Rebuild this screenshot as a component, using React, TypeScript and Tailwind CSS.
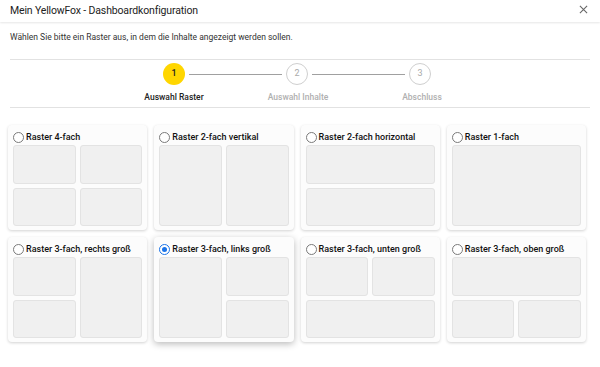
import React from "react";

type Layout = "4" | "2v" | "2h" | "1" | "3r" | "3l" | "3u" | "3o";

const P = ({ className = "" }: { className?: string }) => (
  <div className={`bg-[#f0f0f0] border border-[#e3e3e3] rounded-[3px] ${className}`} />
);

function Panels({ layout }: { layout: Layout }) {
  const g = "grid h-[81px] gap-[4px]";
  switch (layout) {
    case "4":
      return (
        <div className={`${g} grid-cols-2 grid-rows-2`}>
          <P /><P /><P /><P />
        </div>
      );
    case "2v":
      return (
        <div className={`${g} grid-cols-2`}>
          <P /><P />
        </div>
      );
    case "2h":
      return (
        <div className={`${g} grid-rows-2`}>
          <P /><P />
        </div>
      );
    case "1":
      return (
        <div className={`${g}`}>
          <P />
        </div>
      );
    case "3r":
      return (
        <div className={`${g} grid-cols-2 grid-rows-2`}>
          <P /><P className="row-span-2" /><P />
        </div>
      );
    case "3l":
      return (
        <div className={`${g} grid-cols-2 grid-rows-2`}>
          <P className="row-span-2" /><P /><P />
        </div>
      );
    case "3u":
      return (
        <div className={`${g} grid-cols-2 grid-rows-2`}>
          <P /><P /><P className="col-span-2" />
        </div>
      );
    case "3o":
      return (
        <div className={`${g} grid-cols-2 grid-rows-2`}>
          <P className="col-span-2" /><P /><P />
        </div>
      );
  }
}

const cards: { label: string; layout: Layout; selected?: boolean }[] = [
  { label: "Raster 4-fach", layout: "4" },
  { label: "Raster 2-fach vertikal", layout: "2v" },
  { label: "Raster 2-fach horizontal", layout: "2h" },
  { label: "Raster 1-fach", layout: "1" },
  { label: "Raster 3-fach, rechts groß", layout: "3r" },
  { label: "Raster 3-fach, links groß", layout: "3l", selected: true },
  { label: "Raster 3-fach, unten groß", layout: "3u" },
  { label: "Raster 3-fach, oben groß", layout: "3o" },
];

function Card({ label, layout, selected }: { label: string; layout: Layout; selected?: boolean }) {
  return (
    <div
      className={`h-[105px] min-w-0 rounded-[4px] bg-[#fcfcfc] px-[5px] pt-[4px] pb-[4px] ${
        selected
          ? "shadow-[0_2px_7px_rgba(0,0,0,0.28)]"
          : "shadow-[0_1px_3px_rgba(0,0,0,0.18)]"
      }`}
    >
      <div className="flex h-[16px] items-center gap-[2px]">
        {selected ? (
          <span className="flex h-[11px] w-[11px] items-center justify-center rounded-full border-[1.5px] border-[#1a73e8] bg-white">
            <span className="h-[5px] w-[5px] rounded-full bg-[#1a73e8]" />
          </span>
        ) : (
          <span className="h-[11px] w-[11px] rounded-full border border-[#7a7a7a] bg-white" />
        )}
        <span className="text-[9px] font-medium text-[#111] leading-none">{label}</span>
      </div>
      <Panels layout={layout} />
    </div>
  );
}

export default function App() {
  return (
    <div
      className="h-[367px] w-[600px] overflow-hidden bg-white"
      style={{ fontFamily: "Roboto, 'Noto Sans', sans-serif" }}
    >
      <div className="flex h-[22px] items-center justify-between pl-[10px] pr-[12px] shadow-[0_1px_2px_rgba(0,0,0,0.1)]">
        <span className="text-[10.5px] tracking-[-0.15px] text-[#222]">Mein YellowFox - Dashboardkonfiguration</span>
        <svg width="9" height="9" viewBox="0 0 10 10" className="mt-[-3px]">
          <path d="M1 1L9 9M9 1L1 9" stroke="#666" strokeWidth="1.2" />
        </svg>
      </div>
      <div className="px-[10px] pt-[9px] text-[8.5px] text-[#333] leading-[12px]">
        Wählen Sie bitte ein Raster aus, in dem die Inhalte angezeigt werden sollen.
      </div>
      <div className="mx-[10px] mt-[16px] border-y border-[#e2e2e2] h-[49px]">
        <div className="flex items-center pl-[153px] pt-[3px]">
          <div className="flex h-[22px] w-[22px] items-center justify-center rounded-full bg-[#ffd600] text-[9px] font-medium text-[#222]">
            1
          </div>
          <div className="mx-[4px] h-px w-[93px] bg-[#a0a0a0]" />
          <div className="flex h-[22px] w-[22px] items-center justify-center rounded-full border border-[#cfcfcf] bg-white text-[9px] text-[#aaa]">
            2
          </div>
          <div className="mx-[4px] h-px w-[93px] bg-[#a0a0a0]" />
          <div className="flex h-[22px] w-[22px] items-center justify-center rounded-full border border-[#cfcfcf] bg-white text-[9px] text-[#aaa]">
            3
          </div>
        </div>
        <div className="mt-[6px] flex pl-[102px] text-[8.5px] font-medium leading-[12px]">
          <div className="w-[124px] text-center text-[#222]">Auswahl Raster</div>
          <div className="w-[124px] text-center text-[#b0b0b0]">Auswahl Inhalte</div>
          <div className="w-[124px] text-center text-[#b0b0b0]">Abschluss</div>
        </div>
      </div>
      <div className="mt-[17px] grid w-[600px] grid-cols-4 gap-x-[7px] gap-y-[7px] pl-[8px] pr-[14px]">
        {cards.map((c) => (
          <Card key={c.label} {...c} />
        ))}
      </div>
    </div>
  );
}
